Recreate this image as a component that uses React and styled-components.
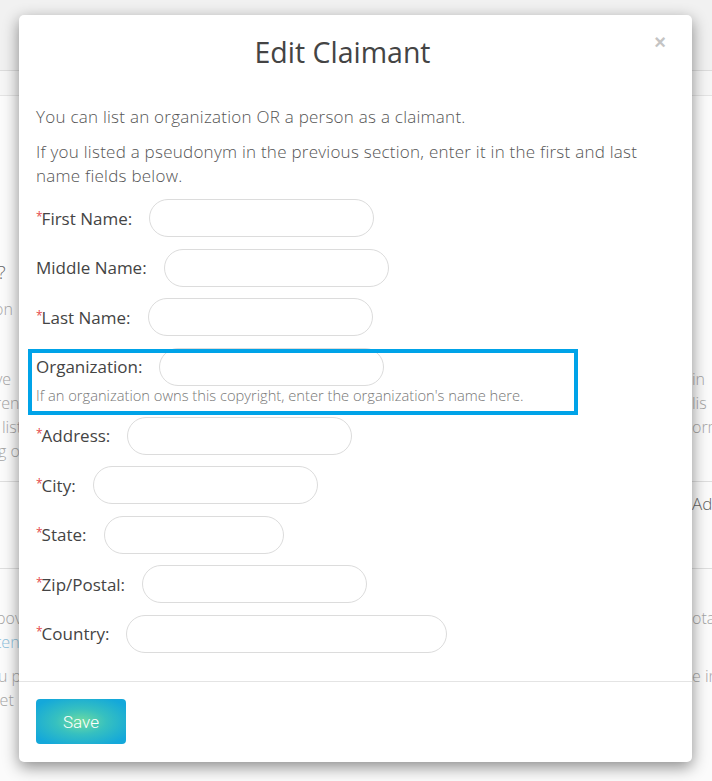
import React from "react";
import styled, { createGlobalStyle } from "styled-components";

const GlobalStyle = createGlobalStyle`
  html, body {
    margin: 0;
    padding: 0;
    background: #fff;
    font-family: "Open Sans", Lato, sans-serif;
    overflow: hidden;
  }
`;

const Page = styled.div`
  width: 712px;
  height: 781px;
  position: relative;
  overflow: hidden;
  background: #fbfbfb;
  color: #9a9a9a;
  font-size: 16px;
`;

const TopBar = styled.div`
  height: 70px;
  background: #f1f1f1;
  border-bottom: 1px solid #dcdcdc;
`;

const SubBar = styled.div`
  height: 24px;
  background: #f6f6f6;
  border-bottom: 1px solid #e4e4e4;
`;

const Section = styled.div`
  padding: ${p => p.pad || "0"};
  border-bottom: ${p => (p.line ? "1px solid #dedede" : "none")};
  display: flex;
  justify-content: space-between;
`;

const SideText = styled.div`
  width: ${p => p.w || 60}px;
  margin-left: ${p => p.ml || 0}px;
  line-height: 24px;
  white-space: nowrap;
  color: ${p => (p.link ? "#8cc0dc" : p.dark ? "#666" : "#a5a5a5")};
  font-size: ${p => p.size || 16}px;
  font-weight: 300;
`;

const Modal = styled.div`
  position: absolute;
  top: 15px;
  left: 19px;
  width: 673px;
  background: #fff;
  border-radius: 5px;
  box-shadow: 0 5px 16px rgba(0, 0, 0, 0.45);
`;

const Header = styled.div`
  padding: 20px 41px 19px 15px;
  text-align: center;
  position: relative;
`;

const Title = styled.h2`
  margin: 0;
  font-size: 28.5px;
  line-height: 34px;
  font-weight: 400;
  color: #444;
`;

const Close = styled.span`
  position: absolute;
  right: 26px;
  top: 16px;
  font-size: 20px;
  color: #c4c4c4;
  font-weight: 700;
  font-family: "Liberation Sans", sans-serif;
`;

const Body = styled.div`
  padding: 17px 17px 17px;
  position: relative;
`;

const Para = styled.p`
  margin: 0 0 11px;
  font-size: 17px;
  letter-spacing: 0.25px;
  line-height: 24px;
  color: #555;
  font-weight: 300;
`;

const Row = styled.div`
  display: flex;
  align-items: center;
  gap: 17px;
  height: 38px;
  margin-bottom: ${p => (p.tight ? 0 : 11.5)}px;
`;

const Group = styled.div`
  margin-bottom: 13px;
`;

const Label = styled.label`
  font-size: 17px;
  color: #444;
  white-space: nowrap;
`;

const Star = styled.span`
  color: #e44b4b;
  font-size: 12px;
  vertical-align: 4px;
  margin-right: -1px;
`;

const Input = styled.input`
  width: ${p => p.w || 225}px;
  height: 38px;
  box-sizing: border-box;
  border: 1px solid #dcdcdc;
  border-radius: 19px;
  background: #fff;
  outline: none;
`;

const Help = styled.div`
  font-size: 14.7px;
  line-height: 18px;
  color: #777;
  font-weight: 300;
`;

const Highlight = styled.div`
  position: absolute;
  left: 9px;
  top: 334px;
  width: 550px;
  height: 66px;
  box-sizing: border-box;
  border: 4px solid #00a3e8;
  pointer-events: none;
`;

const Footer = styled.div`
  border-top: 1px solid #e4e4e4;
  padding: 17px 17px 18px;
`;

const SaveButton = styled.button`
  width: 90px;
  height: 45px;
  border: 0;
  border-radius: 4px;
  color: #fff;
  font-size: 17px;
  font-family: Roboto, sans-serif;
  font-weight: 300;
  background: radial-gradient(ellipse at center, #6ddba2 0%, #36c0c0 40%, #14a8da 85%);
`;

const fields = [
  { label: "First Name:", req: true },
  { label: "Middle Name:" },
  { label: "Last Name:", req: true },
];

const fields2 = [
  { label: "Address:", req: true },
  { label: "City:", req: true },
  { label: "State:", req: true, w: 180 },
  { label: "Zip/Postal:", req: true },
  { label: "Country:", req: true, w: 321 },
];

function Field({ label, req, w }) {
  return (
    <Row>
      <Label>
        {req && <Star>*</Star>}
        {label}
      </Label>
      <Input w={w} />
    </Row>
  );
}

export default function App() {
  return (
    <>
      <GlobalStyle />
      <Page>
        <TopBar />
        <SubBar />
        <Section pad="164px 0 0">
          <SideText ml={-8} dark size={18}>t?</SideText>
        </Section>
        <Section pad="13px 0 0">
          <SideText ml={-6}>on</SideText>
        </Section>
        <Section pad="46px 0 18px" line>
          <div>
            <SideText ml={-5}>ve</SideText>
            <SideText ml={-5}>ren</SideText>
            <SideText ml={2}>list</SideText>
            <SideText ml={-2}>g o</SideText>
          </div>
          <div>
            <SideText w={20}>in</SideText>
            <SideText w={20}>lis</SideText>
            <SideText w={20}>orm</SideText>
          </div>
        </Section>
        <Section pad="10px 0 52px" line>
          <span />
          <SideText w={20} dark size={17}>Ad</SideText>
        </Section>
        <Section pad="37px 0 0">
          <div>
            <SideText ml={-4}>bov</SideText>
            <SideText ml={-4} link>ten</SideText>
          </div>
          <SideText w={20}>ota</SideText>
        </Section>
        <Section pad="10px 0 0">
          <div>
            <SideText ml={-2}>u p</SideText>
            <SideText ml={-4}>let</SideText>
          </div>
          <SideText w={20}>e in</SideText>
        </Section>

        <Modal>
          <Header>
            <Title>Edit Claimant</Title>
            <Close>×</Close>
          </Header>
          <Body>
            <Para>You can list an organization OR a person as a claimant.</Para>
            <Para>
              If you listed a pseudonym in the previous section, enter it in the first and last
              name fields below.
            </Para>
            {fields.map(f => (
              <Field key={f.label} {...f} />
            ))}
            <Group>
              <Row tight>
                <Label>Organization:</Label>
                <Input />
              </Row>
              <Help>If an organization owns this copyright, enter the organization's name here.</Help>
            </Group>
            {fields2.map(f => (
              <Field key={f.label} {...f} />
            ))}
          </Body>
          <Highlight />
          <Footer>
            <SaveButton>Save</SaveButton>
          </Footer>
        </Modal>
      </Page>
    </>
  );
}
